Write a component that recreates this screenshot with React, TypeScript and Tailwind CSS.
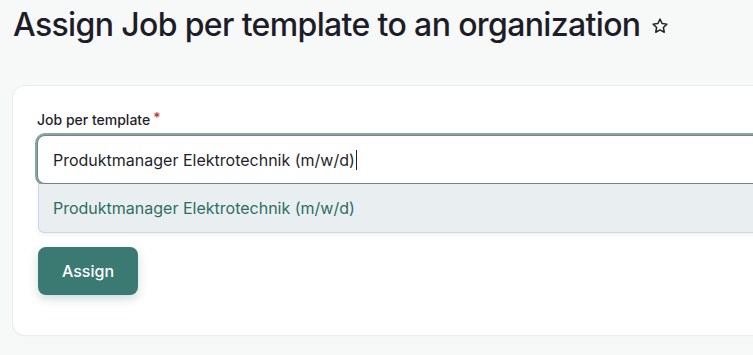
import React from "react";

export default function App() {
  return (
    <div className="min-h-[355px] w-[753px] overflow-hidden bg-[#f7f8f8] font-['Inter',sans-serif] text-[#1f1f2b]">
      <div className="flex items-center gap-[11px] pl-[13px] pt-[5px]">
        <h1 className="whitespace-nowrap text-[32px] font-medium leading-[40px] tracking-[-0.02em] text-[#1d1d29]">
          Assign Job per template to an organization
        </h1>
        <svg width="18" height="18" viewBox="0 0 24 24" fill="none" stroke="#222" strokeWidth="2" strokeLinejoin="round" className="mt-[2px]">
          <path d="M12 2.8l2.8 5.9 6.4.8-4.7 4.4 1.2 6.4L12 17.2l-5.7 3.1 1.2-6.4-4.7-4.4 6.4-.8z" />
        </svg>
      </div>
      <div className="ml-[13px] mt-[41px] w-[800px] rounded-xl bg-white px-6 pb-10 pt-6 shadow-[0_1px_2px_rgba(0,0,0,0.06)] ring-1 ring-[#ececec]">
        <label className="flex items-center gap-[3px] text-[14px] font-medium leading-5 text-[#1f1f2b]">
          Job per template
          <span className="-mt-[4px] text-[#c0392b]">*</span>
        </label>
        <div className="mt-[5px] w-[776px]">
          <div className="flex h-[49px] items-center rounded-t-lg rounded-bl-lg border border-[#7c7f88] bg-white pl-[15px] ring-2 ring-[#7fa9a2]">
            <span className="text-[16px] text-[#1f1f2b]">Produktmanager Elektrotechnik (m/w/d)</span>
            <span className="ml-[1px] h-[20px] w-px bg-[#1f1f2b]" />
          </div>
          <div className="ml-[1px] flex h-[49px] items-center rounded-b-md border border-t-0 border-[#d4d7da] bg-[#e9eff0] pl-[14px] shadow-[0_2px_4px_rgba(0,0,0,0.06)]">
            <span className="text-[16px] text-[#2f6e64]">Produktmanager Elektrotechnik (m/w/d)</span>
          </div>
        </div>
        <button className="ml-[1px] mt-[14px] flex h-[48px] w-[100px] items-center justify-center rounded-lg bg-[#3a7a72] text-[16px] font-medium text-white shadow-[0_4px_10px_rgba(58,122,114,0.25)]">
          Assign
        </button>
      </div>
    </div>
  );
}
